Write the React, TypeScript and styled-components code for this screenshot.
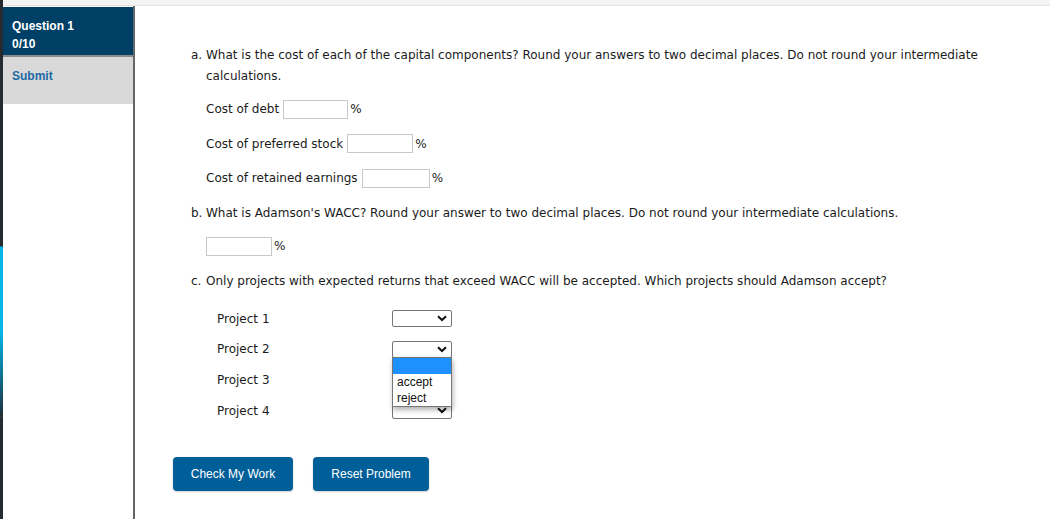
import React from 'react';
import styled, { createGlobalStyle } from 'styled-components';

const GlobalStyle = createGlobalStyle`
  html, body { margin: 0; padding: 0; background: #fff; }
  body { font-family: "DejaVu Sans", Verdana, sans-serif; color: #1b1b1b; }
`;

const Page = styled.div`
  display: flex;
  width: 1050px;
  height: 519px;
  overflow: hidden;
`;

const Strip = styled.div`
  width: 3px;
  flex-shrink: 0;
  background: linear-gradient(
    to bottom,
    #262b30 0px,
    #262b30 246px,
    #00b5e8 247px,
    #00b5e8 332px,
    #1c3a4c 410px,
    #262b30 416px,
    #3a3f44 417px,
    #262b30 418px
  );
`;

const Column = styled.div`
  flex: 1;
  display: flex;
  flex-direction: column;
`;

const TopBar = styled.div`
  height: 5px;
  background: #f4f4f4;
  border-bottom: 1px solid #e2e2e2;
`;

const Body = styled.div`
  flex: 1;
  display: flex;
`;

const Sidebar = styled.aside`
  width: 130px;
  flex-shrink: 0;
  border-right: 2px solid #666;
  padding-top: 1px;
  font-family: "Liberation Sans", Arial, sans-serif;
  font-weight: bold;
  font-size: 12px;
`;

const QuestionHead = styled.div`
  background: #003f66;
  color: #fff;
  height: 50px;
  box-sizing: border-box;
  padding: 10px 0 0 9px;
  line-height: 18px;
  border-bottom: 2px solid #8a8a8a;
`;

const SubmitPanel = styled.div`
  background: #d9d9d9;
  color: #1d6aa5;
  height: 47px;
  box-sizing: border-box;
  padding: 12px 0 0 9px;
`;

const Main = styled.main`
  flex: 1;
  padding: 39px 0 0 56px;
  font-size: 12px;
`;

const Part = styled.div<{ $gap?: number }>`
  display: flex;
  line-height: 21px;
  margin-bottom: ${({ $gap }) => $gap ?? 0}px;
`;

const PartLabel = styled.span`
  width: 15px;
  flex-shrink: 0;
`;

const PartText = styled.span`
  width: 800px;
`;

const Fields = styled.div<{ $after?: number }>`
  display: flex;
  flex-direction: column;
  gap: 14.5px;
  padding-left: 15px;
  margin-bottom: ${({ $after }) => $after ?? 15}px;
`;

const FieldRow = styled.label`
  display: flex;
  align-items: center;
  height: 20px;
  gap: 4px;
`;

const NumInput = styled.span<{ $w?: number }>`
  display: inline-block;
  width: ${({ $w }) => $w ?? 63}px;
  height: 17px;
  border: 1px solid #c8c8c8;
  margin-right: -2px;
`;

const Pct = styled.span``;

const Projects = styled.div`
  display: flex;
  flex-direction: column;
  gap: 11.7px;
  padding: 0 0 0 26px;
  margin-bottom: 37px;
`;

const ProjectRow = styled.div`
  display: flex;
  align-items: center;
  height: 19px;
  position: relative;
`;

const ProjectName = styled.span`
  width: 175px;
`;

const Select = styled.span`
  width: 60px;
  height: 17px;
  box-sizing: border-box;
  border: 1px solid #767676;
  border-radius: 2px;
  display: flex;
  align-items: center;
  justify-content: flex-end;
  padding-right: 4px;
  background: #fff;
`;

const Menu = styled.div`
  position: absolute;
  left: 175px;
  top: 17px;
  width: 60px;
  box-sizing: border-box;
  border: 1px solid #767676;
  background: #fff;
  box-shadow: 1px 3px 5px rgba(0, 0, 0, 0.3);
  font-family: "Liberation Sans", Arial, sans-serif;
  font-size: 12px;
  z-index: 2;
`;

const Option = styled.div<{ $active?: boolean }>`
  height: 16px;
  line-height: 16px;
  padding-left: 4px;
  background: ${({ $active }) => ($active ? '#1e90ff' : '#fff')};
  color: #111;
`;

const Buttons = styled.div`
  display: flex;
  gap: 20px;
  margin-left: -18px;
`;

const Button = styled.button<{ $w: number }>`
  width: ${({ $w }) => $w}px;
  height: 34px;
  border: none;
  border-radius: 4px;
  background: #005f99;
  color: #fff;
  font-family: "Liberation Sans", Arial, sans-serif;
  font-size: 12px;
  box-shadow: 0 1px 2px rgba(0, 0, 0, 0.2);
`;

const Chevron = () => (
  <svg width="10" height="7" viewBox="0 0 10 7">
    <path d="M1 1.2 L5 5 L9 1.2" fill="none" stroke="#111" strokeWidth="2" />
  </svg>
);

const costs = [
  { label: 'Cost of debt', w: 63 },
  { label: 'Cost of preferred stock', w: 64 },
  { label: 'Cost of retained earnings', w: 66 },
];

export default function App() {
  return (
    <Page>
      <GlobalStyle />
      <Strip />
      <Column>
        <TopBar />
        <Body>
          <Sidebar>
            <QuestionHead>
              Question 1
              <br />
              0/10
            </QuestionHead>
            <SubmitPanel>Submit</SubmitPanel>
          </Sidebar>
          <Main>
            <Part $gap={12}>
              <PartLabel>a.</PartLabel>
              <PartText>
                What is the cost of each of the capital components? Round your answers to two decimal
                places. Do not round your intermediate calculations.
              </PartText>
            </Part>
            <Fields $after={15}>
              {costs.map((c) => (
                <FieldRow key={c.label}>
                  {c.label}
                  <NumInput $w={c.w} />
                  <Pct>%</Pct>
                </FieldRow>
              ))}
            </Fields>
            <Part $gap={12}>
              <PartLabel>b.</PartLabel>
              <PartText>
                What is Adamson's WACC? Round your answer to two decimal places. Do not round your
                intermediate calculations.
              </PartText>
            </Part>
            <Fields>
              <FieldRow>
                <NumInput $w={64} />
                <Pct>%</Pct>
              </FieldRow>
            </Fields>
            <Part $gap={17}>
              <PartLabel>c.</PartLabel>
              <PartText>
                Only projects with expected returns that exceed WACC will be accepted. Which projects
                should Adamson accept?
              </PartText>
            </Part>
            <Projects>
              {[1, 2, 3, 4].map((n) => (
                <ProjectRow key={n}>
                  <ProjectName>Project {n}</ProjectName>
                  <Select>
                    <Chevron />
                  </Select>
                  {n === 2 && (
                    <Menu>
                      <Option $active />
                      <Option>accept</Option>
                      <Option>reject</Option>
                    </Menu>
                  )}
                </ProjectRow>
              ))}
            </Projects>
            <Buttons>
              <Button $w={120}>Check My Work</Button>
              <Button $w={116}>Reset Problem</Button>
            </Buttons>
          </Main>
        </Body>
      </Column>
    </Page>
  );
}
